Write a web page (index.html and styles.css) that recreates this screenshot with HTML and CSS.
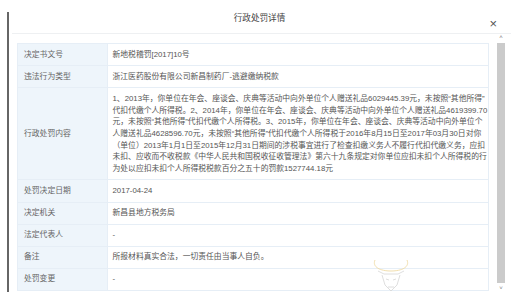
FILE: index.html
```html
<!DOCTYPE html>
<html lang="zh-CN">
<head>
    <meta charset="UTF-8">
    <meta name="viewport" content="width=device-width, initial-scale=1.0">
    <title>行政处罚详情</title>
    <link rel="stylesheet" href="styles.css">
</head>
<body>
    <div class="page">
        <div class="edge"></div>
        <div class="modal">
            <div class="modal-head">
                <span class="modal-title">行政处罚详情</span>
                <span class="close">&times;</span>
            </div>
            <div class="modal-body">
                <div class="content">
                    <table class="detail">
                        <colgroup>
                            <col class="label-col">
                            <col>
                        </colgroup>
                        <tr>
                            <td class="label">决定书文号</td>
                            <td>新地税稽罚[2017]10号</td>
                        </tr>
                        <tr>
                            <td class="label">违法行为类型</td>
                            <td>浙江医药股份有限公司新昌制药厂-逃避缴纳税款</td>
                        </tr>
                        <tr>
                            <td class="label">行政处罚内容</td>
                            <td>1、2013年，你单位在年会、座谈会、庆典等活动中向外单位个人赠送礼品6029445.39元，未按照“其他所得”代扣代缴个人所得税。2、2014年，你单位在年会、座谈会、庆典等活动中向外单位个人赠送礼品4619399.70元，未按照“其他所得”代扣代缴个人所得税。3、2015年，你单位在年会、座谈会、庆典等活动中向外单位个人赠送礼品4628596.70元，未按照“其他所得”代扣代缴个人所得税于2016年8月15日至2017年03月30日对你（单位）2013年1月1日至2015年12月31日期间的涉税事宜进行了检查扣缴义务人不履行代扣代缴义务，应扣未扣、应收而不收税款《中华人民共和国税收征收管理法》第六十九条规定对你单位应扣未扣个人所得税的行为处以应扣未扣个人所得税税款百分之五十的罚款1527744.18元</td>
                        </tr>
                        <tr>
                            <td class="label">处罚决定日期</td>
                            <td>2017-04-24</td>
                        </tr>
                        <tr>
                            <td class="label">决定机关</td>
                            <td>新昌县地方税务局</td>
                        </tr>
                        <tr>
                            <td class="label">法定代表人</td>
                            <td>-</td>
                        </tr>
                        <tr>
                            <td class="label">备注</td>
                            <td>所报材料真实合法，一切责任由当事人自负。</td>
                        </tr>
                        <tr>
                            <td class="label">处罚变更</td>
                            <td>-</td>
                        </tr>
                    </table>
                    <svg class="mark" width="38" height="34" viewBox="0 0 38 34">
                        <path d="M3 2 C0 9 8 13 19 13 C30 13 38 9 35 2" fill="none" stroke="#f2dfae" stroke-width="1"/>
                        <path d="M6 13 L12 16 L26 16 L32 13 M10 17 L13 27 L19 33 L25 27 L28 17 M14 21 L17 22 M24 21 L21 22 M16 29 L22 29" fill="none" stroke="#d6d6d6" stroke-width="0.8"/>
                    </svg>
                </div>
                <div class="scrollbar">
                    <span class="arrow">&#708;</span>
                    <div class="thumb"></div>
                    <span class="arrow">&#709;</span>
                </div>
            </div>
        </div>
    </div>
</body>
</html>
```

FILE: styles.css
```css
body {
    margin: 0;
    font-family: "Liberation Sans", "Noto Sans CJK SC", sans-serif;
    color: #555;
    background: #fff;
}
.page {
    display: flex;
    height: 292px;
    overflow: hidden;
}
.edge {
    width: 2px;
    margin-left: 7px;
    margin-top: 12px;
    background: #666;
}
.modal {
    flex: 1;
    display: flex;
    flex-direction: column;
}
.modal-head {
    position: relative;
    height: 32px;
    border-bottom: 1px solid #eef0f2;
    margin-left: 3px;
    display: flex;
    align-items: center;
    justify-content: center;
    padding-right: 4px;
    padding-top: 1px;
}
.modal-title {
    font-size: 8.6px;
    color: #444;
}
.close {
    position: absolute;
    right: 14px;
    top: 17px;
    font-size: 13px;
    line-height: 13px;
    color: #555;
    font-weight: 300;
}
.modal-body {
    flex: 1;
    display: flex;
}
.content {
    position: relative;
    flex: 1;
    padding: 9px 0 0 8px;
}
.detail {
    width: 472px;
    table-layout: fixed;
    border-collapse: collapse;
    font-size: 7.8px;
    line-height: 11.7px;
}
.label-col {
    width: 90px;
}
.detail td {
    border: 1px solid #e6eef6;
    padding: 4.7px 0 4.7px 4.5px;
    vertical-align: middle;
}
.detail .label {
    padding-left: 6px;
    background: #eef5fb;
    color: #666;
}
.mark {
    position: absolute;
    left: 363px;
    top: 224px;
}
.scrollbar {
    width: 8px;
    margin-right: 6px;
    display: flex;
    flex-direction: column;
    align-items: center;
}
.arrow {
    font-size: 6px;
    line-height: 7px;
    color: #777;
}
.thumb {
    flex: 1;
    width: 8px;
    margin: 2px 0 2px;
    background: #cbcbcb;
}
```
